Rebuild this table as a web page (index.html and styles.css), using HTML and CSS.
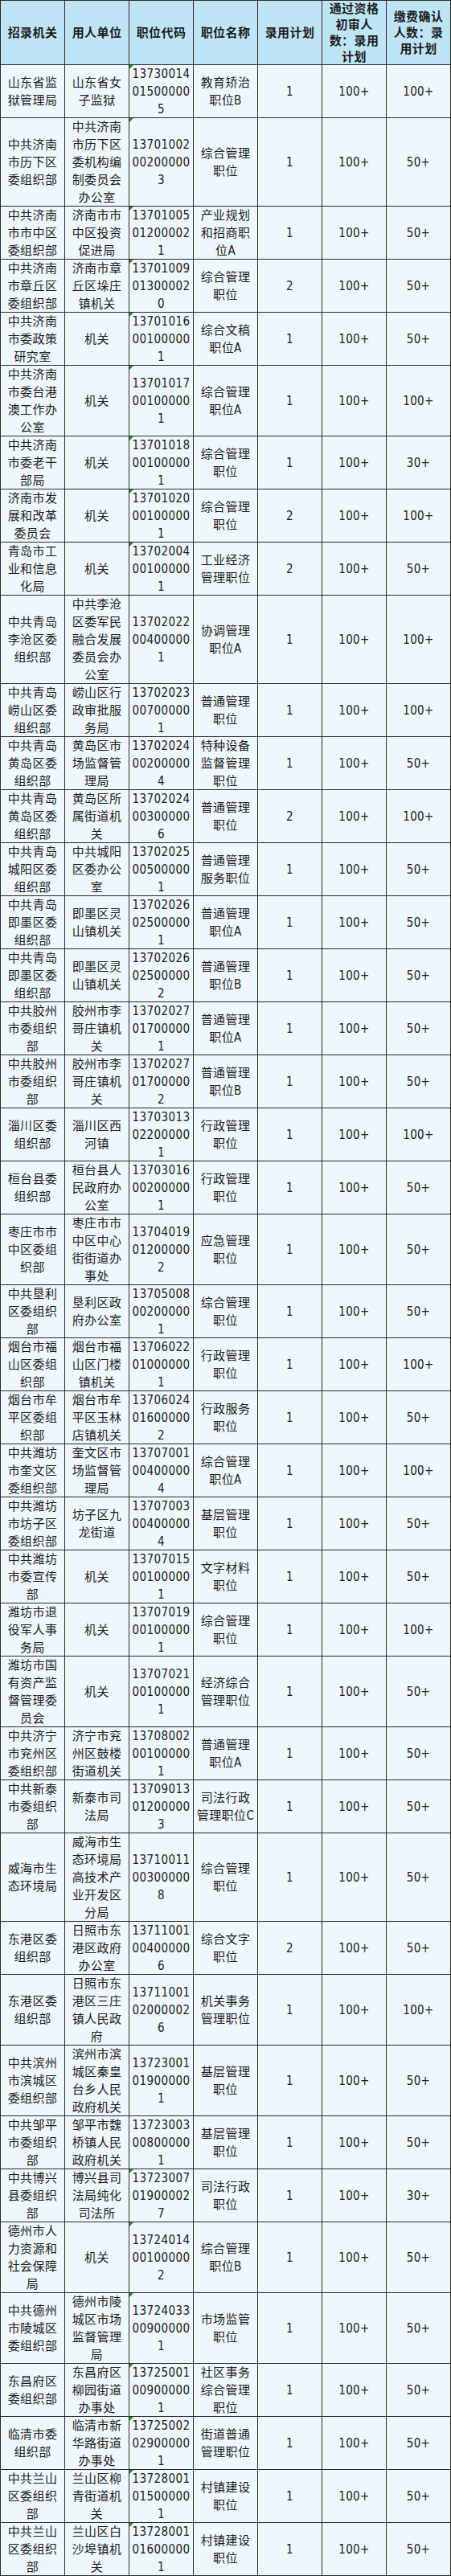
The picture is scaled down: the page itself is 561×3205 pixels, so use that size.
FILE: index.html
```html
<!DOCTYPE html>
<html lang="zh-CN">
<head>
<meta charset="utf-8">
<title>职位报名人数</title>
<link rel="stylesheet" href="styles.css">
</head>
<body>
<table class="jobs">
<thead>
<tr>
<th>招录机关</th><th>用人单位</th><th>职位代码</th><th>职位名称</th><th>录用计划</th><th>通过资格初审人数：录用计划</th><th>缴费确认人数：录用计划</th>
</tr>
</thead>
<tbody>
<tr><td>山东省监狱管理局</td><td>山东省女子监狱</td><td class="code mark">13730014015000005</td><td>教育矫治职位B</td><td>1</td><td>100+</td><td>100+</td></tr>
<tr class="n5"><td>中共济南市历下区委组织部</td><td>中共济南市历下区委机构编制委员会办公室</td><td class="code mark">13701002002000003</td><td>综合管理职位</td><td>1</td><td>100+</td><td>50+</td></tr>
<tr><td>中共济南市市中区委组织部</td><td>济南市市中区投资促进局</td><td class="code mark">13701005012000021</td><td>产业规划和招商职位A</td><td>1</td><td>100+</td><td>50+</td></tr>
<tr><td>中共济南市章丘区委组织部</td><td>济南市章丘区垛庄镇机关</td><td class="code mark">13701009013000020</td><td>综合管理职位</td><td>2</td><td>100+</td><td>50+</td></tr>
<tr><td>中共济南市委政策研究室</td><td>机关</td><td class="code mark">13701016001000001</td><td>综合文稿职位A</td><td>1</td><td>100+</td><td>50+</td></tr>
<tr class="n4"><td>中共济南市委台港澳工作办公室</td><td>机关</td><td class="code mark">13701017001000001</td><td>综合管理职位A</td><td>1</td><td>100+</td><td>100+</td></tr>
<tr><td>中共济南市委老干部局</td><td>机关</td><td class="code mark">13701018001000001</td><td>综合管理职位</td><td>1</td><td>100+</td><td>30+</td></tr>
<tr><td>济南市发展和改革委员会</td><td>机关</td><td class="code mark">13701020001000001</td><td>综合管理职位</td><td>2</td><td>100+</td><td>100+</td></tr>
<tr><td>青岛市工业和信息化局</td><td>机关</td><td class="code mark">13702004001000001</td><td>工业经济管理职位</td><td>2</td><td>100+</td><td>50+</td></tr>
<tr class="n5"><td>中共青岛李沧区委组织部</td><td>中共李沧区委军民融合发展委员会办公室</td><td class="code">13702022004000001</td><td>协调管理职位A</td><td>1</td><td>100+</td><td>100+</td></tr>
<tr><td>中共青岛崂山区委组织部</td><td>崂山区行政审批服务局</td><td class="code">13702023007000001</td><td>普通管理职位</td><td>1</td><td>100+</td><td>100+</td></tr>
<tr><td>中共青岛黄岛区委组织部</td><td>黄岛区市场监督管理局</td><td class="code">13702024002000004</td><td>特种设备监督管理职位</td><td>1</td><td>100+</td><td>50+</td></tr>
<tr><td>中共青岛黄岛区委组织部</td><td>黄岛区所属街道机关</td><td class="code">13702024003000006</td><td>普通管理职位</td><td>2</td><td>100+</td><td>100+</td></tr>
<tr><td>中共青岛城阳区委组织部</td><td>中共城阳区委办公室</td><td class="code">13702025005000001</td><td>普通管理服务职位</td><td>1</td><td>100+</td><td>50+</td></tr>
<tr><td>中共青岛即墨区委组织部</td><td>即墨区灵山镇机关</td><td class="code">13702026025000001</td><td>普通管理职位A</td><td>1</td><td>100+</td><td>50+</td></tr>
<tr><td>中共青岛即墨区委组织部</td><td>即墨区灵山镇机关</td><td class="code">13702026025000002</td><td>普通管理职位B</td><td>1</td><td>100+</td><td>50+</td></tr>
<tr><td>中共胶州市委组织部</td><td>胶州市李哥庄镇机关</td><td class="code">13702027017000001</td><td>普通管理职位A</td><td>1</td><td>100+</td><td>50+</td></tr>
<tr><td>中共胶州市委组织部</td><td>胶州市李哥庄镇机关</td><td class="code">13702027017000002</td><td>普通管理职位B</td><td>1</td><td>100+</td><td>50+</td></tr>
<tr><td>淄川区委组织部</td><td>淄川区西河镇</td><td class="code">13703013022000001</td><td>行政管理职位</td><td>1</td><td>100+</td><td>100+</td></tr>
<tr><td>桓台县委组织部</td><td>桓台县人民政府办公室</td><td class="code">13703016002000001</td><td>行政管理职位</td><td>1</td><td>100+</td><td>50+</td></tr>
<tr class="n4"><td>枣庄市市中区委组织部</td><td>枣庄市市中区中心街街道办事处</td><td class="code">13704019012000002</td><td>应急管理职位</td><td>1</td><td>100+</td><td>50+</td></tr>
<tr><td>中共垦利区委组织部</td><td>垦利区政府办公室</td><td class="code">13705008002000001</td><td>综合管理职位</td><td>1</td><td>100+</td><td>50+</td></tr>
<tr><td>烟台市福山区委组织部</td><td>烟台市福山区门楼镇机关</td><td class="code">13706022010000001</td><td>行政管理职位</td><td>1</td><td>100+</td><td>100+</td></tr>
<tr><td>烟台市牟平区委组织部</td><td>烟台市牟平区玉林店镇机关</td><td class="code">13706024016000002</td><td>行政服务职位</td><td>1</td><td>100+</td><td>50+</td></tr>
<tr><td>中共潍坊市奎文区委组织部</td><td>奎文区市场监督管理局</td><td class="code">13707001004000004</td><td>综合管理职位A</td><td>1</td><td>100+</td><td>100+</td></tr>
<tr><td>中共潍坊市坊子区委组织部</td><td>坊子区九龙街道</td><td class="code">13707003004000004</td><td>基层管理职位</td><td>1</td><td>100+</td><td>50+</td></tr>
<tr><td>中共潍坊市委宣传部</td><td>机关</td><td class="code">13707015001000001</td><td>文字材料职位</td><td>1</td><td>100+</td><td>50+</td></tr>
<tr><td>潍坊市退役军人事务局</td><td>机关</td><td class="code">13707019001000001</td><td>综合管理职位</td><td>1</td><td>100+</td><td>100+</td></tr>
<tr class="n4"><td>潍坊市国有资产监督管理委员会</td><td>机关</td><td class="code">13707021001000001</td><td>经济综合管理职位</td><td>1</td><td>100+</td><td>50+</td></tr>
<tr><td>中共济宁市兖州区委组织部</td><td>济宁市兖州区鼓楼街道机关</td><td class="code">13708002001000001</td><td>普通管理职位A</td><td>1</td><td>100+</td><td>50+</td></tr>
<tr><td>中共新泰市委组织部</td><td>新泰市司法局</td><td class="code">13709013012000003</td><td>司法行政管理职位C</td><td>1</td><td>100+</td><td>50+</td></tr>
<tr class="n5"><td>威海市生态环境局</td><td>威海市生态环境局高技术产业开发区分局</td><td class="code">13710011003000008</td><td>综合管理职位</td><td>1</td><td>100+</td><td>50+</td></tr>
<tr><td>东港区委组织部</td><td>日照市东港区政府办公室</td><td class="code">13711001004000006</td><td>综合文字职位</td><td>2</td><td>100+</td><td>50+</td></tr>
<tr class="n4"><td>东港区委组织部</td><td>日照市东港区三庄镇人民政府</td><td class="code">13711001020000026</td><td>机关事务管理职位</td><td>1</td><td>100+</td><td>100+</td></tr>
<tr class="n4"><td>中共滨州市滨城区委组织部</td><td>滨州市滨城区秦皇台乡人民政府机关</td><td class="code">13723001019000001</td><td>基层管理职位</td><td>1</td><td>100+</td><td>50+</td></tr>
<tr><td>中共邹平市委组织部</td><td>邹平市魏桥镇人民政府机关</td><td class="code">13723003008000001</td><td>基层管理职位</td><td>1</td><td>100+</td><td>50+</td></tr>
<tr><td>中共博兴县委组织部</td><td>博兴县司法局纯化司法所</td><td class="code mark">13723007019000027</td><td>司法行政职位</td><td>1</td><td>100+</td><td>30+</td></tr>
<tr class="n4"><td>德州市人力资源和社会保障局</td><td>机关</td><td class="code mark">13724014001000002</td><td>综合管理职位B</td><td>1</td><td>100+</td><td>50+</td></tr>
<tr class="n4"><td>中共德州市陵城区委组织部</td><td>德州市陵城区市场监督管理局</td><td class="code mark">13724033009000001</td><td>市场监管职位</td><td>1</td><td>100+</td><td>50+</td></tr>
<tr><td>东昌府区委组织部</td><td>东昌府区柳园街道办事处</td><td class="code mark">13725001009000001</td><td>社区事务综合管理职位</td><td>1</td><td>100+</td><td>50+</td></tr>
<tr><td>临清市委组织部</td><td>临清市新华路街道办事处</td><td class="code mark">13725002029000001</td><td>街道普通管理职位</td><td>1</td><td>100+</td><td>50+</td></tr>
<tr><td>中共兰山区委组织部</td><td>兰山区柳青街道机关</td><td class="code mark">13728001015000001</td><td>村镇建设职位</td><td>1</td><td>100+</td><td>50+</td></tr>
<tr><td>中共兰山区委组织部</td><td>兰山区白沙埠镇机关</td><td class="code mark">13728001016000001</td><td>村镇建设职位</td><td>1</td><td>100+</td><td>50+</td></tr>
</tbody>
</table>
</body>
</html>
```
FILE: styles.css
```css
html, body {
  margin: 0;
  padding: 0;
  background: #ffffff;
}

.jobs {
  display: grid;
  grid-template-columns: repeat(7, 79px);
  gap: 1px;
  padding: 1px;
  width: 561px;
  box-sizing: border-box;
  background: #2a2a2a;
  border: 0;
  border-spacing: 0;
  font-family: "DejaVu Sans", "Noto Sans CJK SC", sans-serif;
  font-stretch: condensed;
  font-size: 15px;
  letter-spacing: 0.4px;
  color: #1c1c1c;
}

.jobs thead,
.jobs tbody,
.jobs tr {
  display: contents;
}

.jobs th,
.jobs td {
  display: flex;
  align-items: center;
  justify-content: center;
  text-align: center;
  box-sizing: border-box;
  padding: 0 3px;
  height: 65px;
  line-height: 22px;
  background: #eef7fb;
  overflow: visible;
}

.jobs th {
  height: 79px;
  line-height: 20px;
  font-weight: bold;
  background: #bfe5f5;
}

.jobs .n4 td {
  height: 87px;
}

.jobs .n5 td {
  height: 109px;
}

.jobs .code {
  word-break: break-all;
}

.jobs .mark {
  position: relative;
}

.jobs .mark::before {
  content: "";
  position: absolute;
  top: 0;
  left: 0;
  border-top: 5px solid #1f8f2a;
  border-right: 5px solid transparent;
}
```
